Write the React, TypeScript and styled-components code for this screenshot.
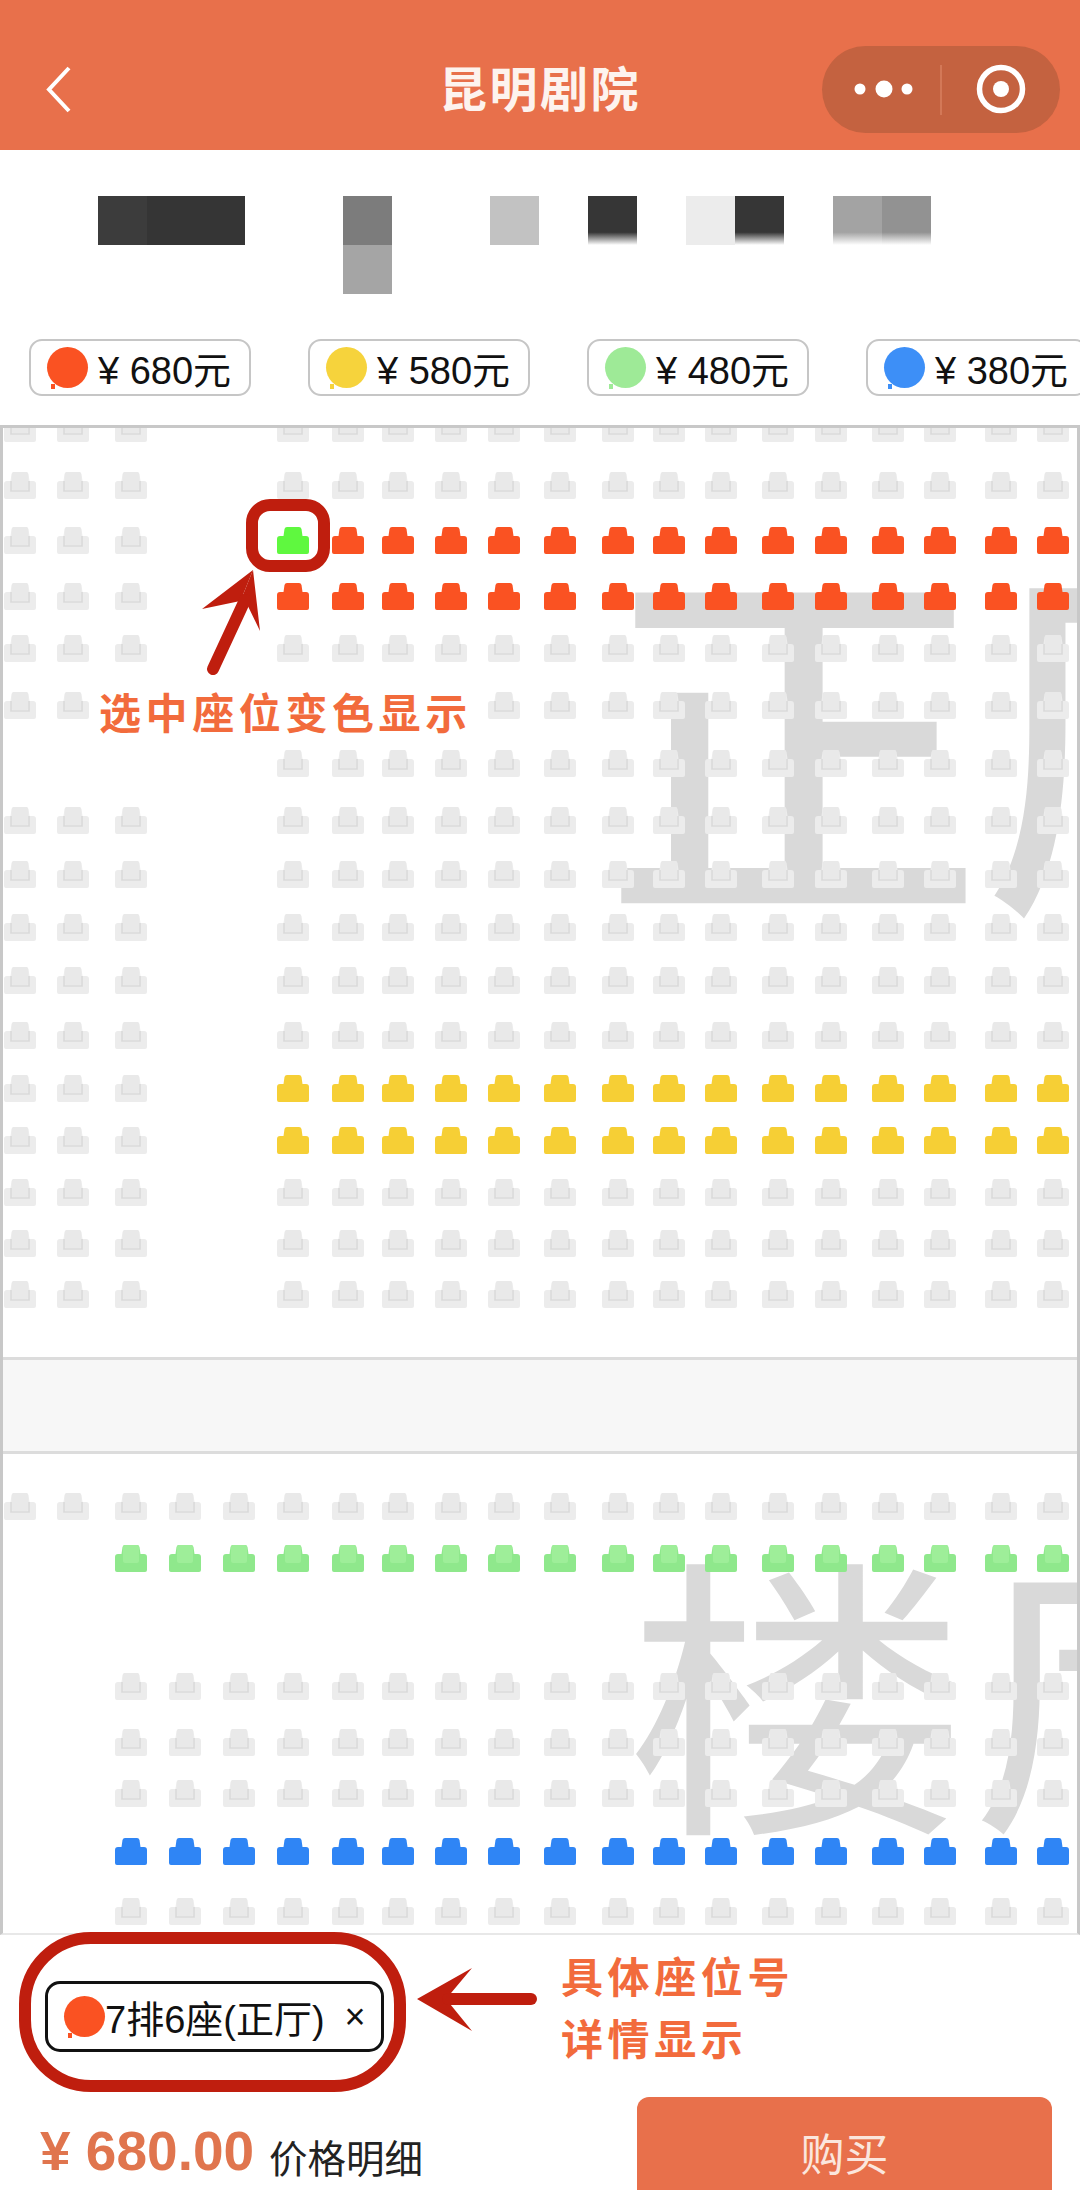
import React from "react";
import styled, { createGlobalStyle } from "styled-components";

const sans = `"Liberation Sans", "Noto Sans CJK SC", sans-serif`;
const cjk = `"Noto Sans CJK SC", sans-serif`;
const brand = "#e8704b";
const annotation = "#bf1e0e";
const labelOrange = "#f26b3c";

const GlobalStyle = createGlobalStyle`
  html, body {
    margin: 0;
    padding: 0;
    background: #fff;
  }
`;

const Page = styled.div`
  position: relative;
  width: 1080px;
  height: 2190px;
  overflow: hidden;
  display: flex;
  flex-direction: column;
  background: #fff;
  font-family: ${sans};
`;

const Header = styled.header`
  flex: none;
  height: 150px;
  display: flex;
  align-items: center;
  justify-content: space-between;
  padding: 29px 20px 0 46px;
  box-sizing: border-box;
  background: ${brand};
  position: relative;
`;

const Title = styled.h1`
  position: absolute;
  left: 0;
  right: 0;
  top: 55px;
  margin: 0;
  text-align: center;
  color: #fdf3ee;
  font: 700 48px/62px ${cjk};
  letter-spacing: 2.5px;
`;

const Capsule = styled.div`
  width: 238px;
  height: 87px;
  border-radius: 44px;
  background: #c46240;
`;

const Mosaic = styled.div`
  flex: none;
  height: 189px;
  box-sizing: border-box;
  padding: 46px 0 0 98px;
  display: grid;
  grid-template-columns: repeat(17, 49px);
  grid-template-rows: repeat(2, 49px);
  align-content: start;
`;

const Tile = styled.div<{ $shade?: string; $fade?: boolean; $row?: number; $col?: number }>`
  grid-row: ${({ $row }) => $row ?? 1};
  grid-column: ${({ $col }) => $col ?? "auto"};
  background: ${({ $shade, $fade }) =>
    !$shade ? "transparent" : $fade ? `linear-gradient(${$shade} 0 74%, #fff 100%)` : $shade};
`;

const PriceRow = styled.div`
  flex: none;
  display: flex;
  gap: 57px;
  height: 57px;
  padding-left: 29px;
  overflow: hidden;
`;

const PriceChip = styled.div`
  flex: none;
  width: 222px;
  height: 57px;
  box-sizing: border-box;
  display: flex;
  align-items: center;
  gap: 10px;
  padding-left: 16px;
  border: 2px solid #c6c6c6;
  border-radius: 13px;
  color: #111;
  font-size: 38px;
`;

const Dot = styled.span<{ $color: string }>`
  flex: none;
  position: relative;
  width: 41px;
  height: 41px;
  border-radius: 50%;
  background: ${({ $color }) => $color};

  &::after {
    content: "";
    position: absolute;
    left: 4px;
    bottom: -1px;
    width: 4px;
    height: 5px;
    background: ${({ $color }) => $color};
  }
`;

const SeatMap = styled.section`
  flex: none;
  margin-top: 29px;
  height: 1510px;
  box-sizing: border-box;
  display: flex;
  flex-direction: column;
  border: solid #c8c8c8;
  border-width: 3px 3px 2px 3px;
  border-bottom-color: #e8e8e8;
`;

const Hall = styled.div<{ $height?: number; $top: number }>`
  position: relative;
  flex: ${({ $height }) => ($height ? "none" : "1")};
  height: ${({ $height }) => ($height ? `${$height}px` : "auto")};
  min-height: 0;
  overflow: hidden;
  padding: ${({ $top }) => $top}px 0 0 1px;
  box-sizing: border-box;
`;

const Watermark = styled.div<{
  $size: number;
  $left: number;
  $top: number;
  $stretch?: number;
  $weight?: number;
}>`
  position: absolute;
  left: ${({ $left }) => $left}px;
  top: ${({ $top }) => $top}px;
  font: ${({ $weight }) => $weight ?? 500} ${({ $size }) => $size}px/1 ${cjk};
  color: #d9d9d9;
  white-space: nowrap;
  transform-origin: left top;
  transform: scaleX(${({ $stretch }) => $stretch ?? 1});
`;

const Aisle = styled.div`
  flex: none;
  height: 97px;
  box-sizing: border-box;
  background: #f7f7f7;
  border: solid #dcdcdc;
  border-width: 3px 0;
`;

const SeatGrid = styled.div<{ $rows: string; $pull?: number }>`
  position: relative;
  display: grid;
  margin-top: ${({ $pull }) => -($pull ?? 0)}px;
  grid-template-columns: 53px 58px 54px 54px 54px 55px 50px 53px 53px 56px 58px 51px 52px 57px 53px 57px 52px 61px 52px 32px;
  grid-template-rows: ${({ $rows }) => $rows};
`;

const SeatIcon = styled.svg`
  display: block;
  width: 32px;
  height: 27px;
  filter: blur(0.6px);
`;

const Footer = styled.footer`
  flex: 1;
  position: relative;
  display: flex;
  flex-direction: column;
  min-height: 0;
`;

const PickedSeat = styled.div`
  width: 339px;
  height: 71px;
  margin: 46px 0 0 45px;
  box-sizing: border-box;
  display: flex;
  align-items: center;
  padding-left: 16px;
  border: 3px solid #111;
  border-radius: 15px;
  color: #111;
  font-size: 38px;
  white-space: nowrap;
`;

const RemoveMark = styled.span`
  margin-left: 20px;
  font-size: 36px;
`;

const CheckoutBar = styled.div`
  flex: 1;
  display: flex;
  align-items: flex-end;
  justify-content: space-between;
  padding: 0 28px 0 40px;
  margin-top: 45px;
`;

const Total = styled.div`
  display: flex;
  align-items: baseline;
  margin-bottom: 9px;
`;

const Amount = styled.span`
  color: #e0754e;
  font-weight: 700;
  font-size: 55px;
  line-height: 60px;
`;

const BreakdownLink = styled.span`
  margin-left: 15px;
  color: #222;
  font-size: 38.5px;
  transform: translateY(3px);
`;

const BuyButton = styled.button`
  width: 415px;
  height: 93px;
  border: none;
  border-radius: 12px 12px 0 0;
  background: ${brand};
  color: #fbe6dd;
  font: 400 44px/1 ${cjk};
  padding: 16px 0 0;
`;

const SelectionRing = styled.div`
  position: absolute;
  left: 246px;
  top: 499px;
  width: 84px;
  height: 73px;
  box-sizing: border-box;
  border: 12px solid ${annotation};
  border-radius: 24px;
`;

const DetailRing = styled.div`
  position: absolute;
  left: 19px;
  top: 1932px;
  width: 387px;
  height: 160px;
  box-sizing: border-box;
  border: 12px solid ${annotation};
  border-radius: 72px;
`;

const ArrowSvg = styled.svg<{ $x: number; $y: number }>`
  position: absolute;
  left: ${({ $x }) => $x}px;
  top: ${({ $y }) => $y}px;
`;

const Callout = styled.div<{ $x: number; $y: number }>`
  position: absolute;
  left: ${({ $x }) => $x}px;
  top: ${({ $y }) => $y}px;
  background: #fff;
  color: ${labelOrange};
  font: 700 42px/44px ${cjk};
  letter-spacing: 4.6px;
  white-space: nowrap;
`;

const tones: Record<string, { fill: string; back?: string; line?: string }> = {
  g: { fill: "#ececec", back: "#e9e9e9", line: "#dadada" },
  r: { fill: "#fa5222" },
  y: { fill: "#f6cf35" },
  n: { fill: "#8fe88c", back: "#9eee99" },
  b: { fill: "#2f85f5" },
  S: { fill: "#5ff83f" },
};

function Seat({ tone }: { tone: string }) {
  const t = tones[tone];
  return (
    <SeatIcon viewBox="0 0 32 27">
      <path
        d="M7.5 2Q8 0 10 0H22Q24 0 24.5 2L25.5 9H29Q32 9 32 12V25Q32 27 30 27H2Q0 27 0 25V12Q0 9 3 9H6.5Z"
        fill={t.fill}
      />
      {t.back && <rect x="8" y="0" width="16" height="18" rx="2" fill={t.back} />}
      {t.line && <path d="M7 9V19H25V9" fill="none" stroke={t.line} strokeWidth="1.6" />}
    </SeatIcon>
  );
}

function SeatRows({ rows }: { rows: string[] }) {
  return (
    <>
      {rows.flatMap((row, r) =>
        row.split("").map((c, i) => <div key={`${r}-${i}`}>{c !== "." && <Seat tone={c} />}</div>)
      )}
    </>
  );
}

const full = (side: string, mid: string, main: string) => side.repeat(3) + mid.repeat(2) + main;
const allGrey = full("g", ".", "g".repeat(15));

const mainRows = [
  allGrey,
  allGrey,
  "ggg..S" + "r".repeat(14),
  full("g", ".", "r".repeat(15)),
  allGrey,
  allGrey,
  "....." + "g".repeat(15),
  allGrey,
  allGrey,
  allGrey,
  allGrey,
  allGrey,
  full("g", ".", "y".repeat(15)),
  full("g", ".", "y".repeat(15)),
  allGrey,
  allGrey,
  allGrey,
];

const balconyRows = [
  "g".repeat(20),
  ".." + "n".repeat(18),
  ".." + "g".repeat(18),
  ".." + "g".repeat(18),
  ".." + "g".repeat(18),
  ".." + "b".repeat(18),
  ".." + "g".repeat(18),
];

const prices = [
  { color: "#fa5222", label: "680" },
  { color: "#f6d33c", label: "580" },
  { color: "#9eea97", label: "480" },
  { color: "#3d8ff7", label: "380" },
];

const tiles: { shade?: string; fade?: boolean }[] = [
  { shade: "#3c3c3c" },
  { shade: "#353535" },
  { shade: "#353535" },
  {},
  {},
  { shade: "#7c7c7c" },
  {},
  {},
  { shade: "#c2c2c2" },
  {},
  { shade: "#363636", fade: true },
  {},
  { shade: "#ececec" },
  { shade: "#363636", fade: true },
  {},
  { shade: "#a3a3a3", fade: true },
  { shade: "#929292", fade: true },
];

export default function App() {
  return (
    <Page>
      <GlobalStyle />
      <Header>
        <svg width="26" height="47" viewBox="0 0 26 47" fill="none">
          <path d="M23 2L3 23.5L23 45" stroke="#fff" strokeWidth="4" />
        </svg>
        <Title>昆明剧院</Title>
        <Capsule>
          <svg width="238" height="87" viewBox="0 0 238 87">
            <circle cx="38" cy="43" r="5.5" fill="#fff" />
            <circle cx="62" cy="43" r="8.5" fill="#fff" />
            <circle cx="85" cy="43" r="5.5" fill="#fff" />
            <path d="M119 19V69" stroke="#d8805f" strokeWidth="1.5" />
            <circle cx="179" cy="43" r="21.5" fill="none" stroke="#fff" strokeWidth="5.5" />
            <circle cx="179" cy="43" r="8" fill="#fff" />
          </svg>
        </Capsule>
      </Header>

      <Mosaic>
        {tiles.map((t, i) => (
          <Tile key={i} $shade={t.shade} $fade={t.fade} />
        ))}
        <Tile $row={2} $col={6} $shade="#a5a5a5" />
      </Mosaic>

      <PriceRow>
        {prices.map((p) => (
          <PriceChip key={p.label}>
            <Dot $color={p.color} />
            <span>¥ {p.label}元</span>
          </PriceChip>
        ))}
      </PriceRow>

      <SeatMap>
        <Hall $height={929} $top={0}>
          <Watermark $size={380} $left={600} $top={103}>
            正厅
          </Watermark>
          <SeatGrid
            $pull={13}
            $rows="57px 55px 56px 52px 57px 58px 57px 54px 53px 53px 55px 53px 52px 52px 51px 51px 76px"
          >
            <SeatRows rows={mainRows} />
          </SeatGrid>
        </Hall>
        <Aisle />
        <Hall $top={39}>
          <Watermark $size={295} $left={622} $top={82} $stretch={1.17} $weight={400}>
            楼厅
          </Watermark>
          <SeatGrid $rows="52px 128px 56px 51px 58px 60px 40px">
            <SeatRows rows={balconyRows} />
          </SeatGrid>
        </Hall>
      </SeatMap>

      <Footer>
        <PickedSeat>
          <Dot $color="#fa5222" />
          <span>7排6座(正厅)</span>
          <RemoveMark>×</RemoveMark>
        </PickedSeat>
        <CheckoutBar>
          <Total>
            <Amount>¥ 680.00</Amount>
            <BreakdownLink>价格明细</BreakdownLink>
          </Total>
          <BuyButton>购买</BuyButton>
        </CheckoutBar>
      </Footer>

      <SelectionRing />
      <ArrowSvg $x={195} $y={565} width="75" height="112" viewBox="0 0 75 112">
        <path d="M58 5L7 44L50 35L18 104" fill={annotation} />
        <path d="M58 5L65 66L50 35L18 104Z" fill={annotation} />
        <path d="M50 35L18 104" stroke={annotation} strokeWidth="12" strokeLinecap="round" />
      </ArrowSvg>
      <Callout $x={99} $y={689}>
        选中座位变色显示
      </Callout>

      <DetailRing />
      <ArrowSvg $x={412} $y={1962} width="130" height="74" viewBox="0 0 130 74">
        <path d="M5 37L60 6L34 37L60 69Z" fill={annotation} />
        <path d="M36 37H119" stroke={annotation} strokeWidth="12" strokeLinecap="round" />
      </ArrowSvg>
      <Callout $x={561} $y={1953}>
        具体座位号
      </Callout>
      <Callout $x={561} $y={2015}>
        详情显示
      </Callout>
    </Page>
  );
}
